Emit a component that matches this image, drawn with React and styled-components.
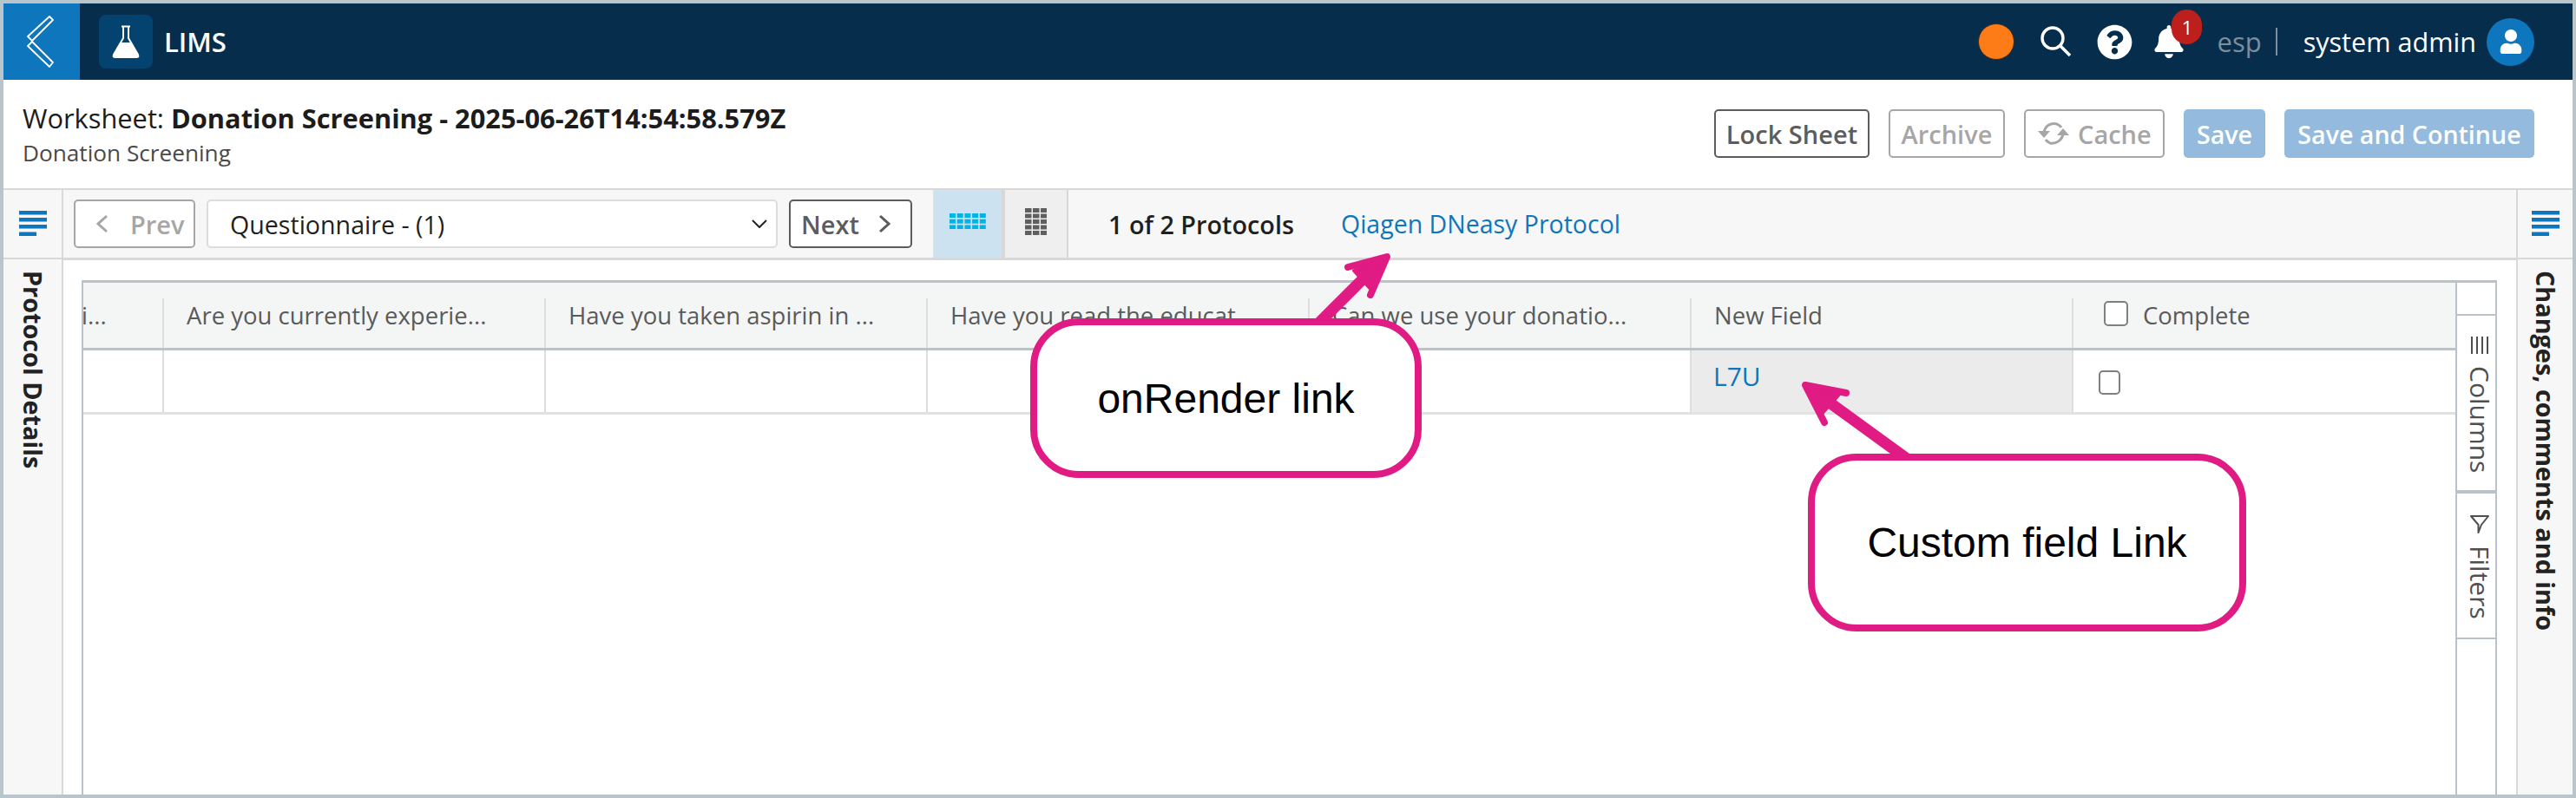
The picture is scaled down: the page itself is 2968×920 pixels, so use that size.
import React from 'react';
import styled, { createGlobalStyle } from 'styled-components';
import { FaBell, FaQuestionCircle, FaUser } from 'react-icons/fa';

const Global = createGlobalStyle`
  html, body { margin: 0; padding: 0; background: #fff; }
  body { font-family: "Open Sans", "Liberation Sans", sans-serif; overflow: hidden; }
  * { box-sizing: border-box; }
  svg { flex: none; }
`;

const Page = styled.div`
  position: relative;
  width: 2968px;
  height: 920px;
  border: 4px solid #b8c6cc;
  display: flex;
  flex-direction: column;
  overflow: hidden;
  background: #fff;
`;

const TopBar = styled.header`
  height: 88px;
  flex: none;
  background: #062d4b;
  display: flex;
  align-items: center;
  color: #fff;
  padding-right: 44px;
`;
const BackButton = styled.div`
  width: 88px;
  height: 88px;
  background: #0e76bc;
  display: flex;
  align-items: center;
  justify-content: center;
`;
const LogoTile = styled.div`
  width: 62px;
  height: 62px;
  margin-left: 22px;
  border-radius: 8px;
  background: #04436f;
  display: flex;
  align-items: center;
  justify-content: center;
`;
const AppName = styled.div`
  margin-left: 13px;
  font-size: 31px;
  font-weight: 600;
`;
const TopRight = styled.div`
  margin-left: auto;
  display: flex;
  align-items: center;
`;
const StatusDot = styled.div`
  width: 42px;
  height: 42px;
  border-radius: 50%;
  background: #fe7c18;
  border: 1px solid #3a2a20;
`;
const IconSlot = styled.div`
  position: relative;
  display: flex;
  margin-left: ${p => p.$ml}px;
`;
const Badge = styled.span`
  position: absolute;
  left: 22px;
  top: -18px;
  width: 35px;
  height: 40px;
  border-radius: 18px;
  background: #bd201c;
  color: #fff;
  font-size: 22px;
  display: flex;
  align-items: center;
  justify-content: center;
`;
const Lang = styled.span`
  margin-left: 36px;
  font-size: 31px;
  color: #7d8e9c;
`;
const Pipe = styled.span`
  width: 2px;
  height: 32px;
  margin-left: 16px;
  background: #7d8e9c;
`;
const UserName = styled.span`
  margin-left: 30px;
  font-size: 30.6px;
`;
const Avatar = styled.div`
  width: 55px;
  height: 55px;
  margin-left: 12px;
  border-radius: 50%;
  background: #0e76bc;
  overflow: hidden;
  display: flex;
  align-items: center;
  justify-content: center;
`;

const TitleBar = styled.section`
  height: 127px;
  flex: none;
  display: flex;
  align-items: flex-start;
  justify-content: space-between;
  padding: 23px 44px 0 22px;
  border-bottom: 2px solid #d8d8d8;
`;
const TitleLine = styled.div`
  font-size: 30.8px;
  line-height: 42px;
  color: #1c1c1c;
  b { font-weight: 700; }
`;
const SubLine = styled.div`
  font-size: 26.2px;
  line-height: 36px;
  margin-top: 1px;
  color: #4a4a4a;
`;
const Actions = styled.div`
  display: flex;
  gap: 22px;
  margin-top: 11px;
`;
const Btn = styled.div`
  width: ${p => p.$w}px;
  height: 56px;
  padding-left: ${p => p.$pad ?? 0}px;
  border: 2px solid ${p => p.$off ? '#a6a6a6' : '#5c5c5c'};
  border-radius: 5px;
  background: #fff;
  color: ${p => p.$off ? '#a6a6a6' : '#5c5c5c'};
  font-size: 29px;
  font-weight: 600;
  display: flex;
  align-items: center;
  justify-content: ${p => p.$start ? 'flex-start' : 'center'};
  gap: ${p => p.$gap || 0}px;
  white-space: nowrap;
`;
const PrimaryBtn = styled.div`
  width: ${p => p.$w}px;
  height: 56px;
  border-radius: 5px;
  background: #94bade;
  color: #fff;
  font-size: 28.6px;
  font-weight: 600;
  display: flex;
  align-items: center;
  justify-content: center;
  white-space: nowrap;
`;

const Body = styled.div`
  flex: 1;
  min-height: 0;
  display: flex;
`;
const SideRail = styled.aside`
  width: ${p => p.$w}px;
  flex: none;
  background: #f7f7f7;
  ${p => p.$right ? 'border-left' : 'border-right'}: 2px solid #d8d8d8;
`;
const RailIcon = styled.div`
  height: 80px;
  display: flex;
  align-items: center;
  justify-content: center;
  padding-bottom: 2px;
  border-bottom: 2px solid #d8d8d8;
`;
const RailLabel = styled.div`
  writing-mode: vertical-rl;
  font-size: 28.8px;
  font-weight: 700;
  color: #222;
  margin: 13px auto 0;
  line-height: 40px;
  white-space: nowrap;
  width: 40px;
`;
const Center = styled.main`
  flex: 1;
  min-width: 0;
  display: flex;
  flex-direction: column;
`;
const Toolbar = styled.div`
  height: 81px;
  flex: none;
  background: #f7f7f7;
  border-bottom: 3px solid #d8d8d8;
  display: flex;
  align-items: stretch;
  padding-left: 12px;
`;
const ToolLeft = styled.div`
  display: flex;
  align-items: center;
  gap: 13px;
`;
const SelectBox = styled.div`
  width: 658px;
  height: 56px;
  border: 2px solid #dcdcdc;
  border-radius: 5px;
  background: #fff;
  padding: 0 10px 0 25px;
  display: flex;
  align-items: center;
  justify-content: space-between;
  font-size: 28.6px;
  color: #1f1f1f;
`;
const Toggle = styled.div`
  width: ${p => p.$w}px;
  margin-left: ${p => p.$ml || 0}px;
  background: ${p => p.$on ? '#cde2f1' : '#efefef'};
  border-left: ${p => p.$on ? '1px solid #e2e2e2' : '2px solid #d8d8d8'};
  border-right: 2px solid #d8d8d8;
  display: flex;
  align-items: center;
  justify-content: center;
  padding-bottom: 6px;
`;
const ProtocolCount = styled.div`
  margin-left: 46px;
  align-self: center;
  font-size: 28.8px;
  font-weight: 600;
  color: #1f1f1f;
`;
const ProtocolLink = styled.a`
  margin-left: 54px;
  align-self: center;
  font-size: 28.5px;
  color: #0e76bc;
`;

const TableArea = styled.div`
  flex: 1;
  min-height: 0;
  margin: 23px 22px 0 21px;
  border-left: 2px solid #bcc2c9;
  border-right: 2px solid #bcc2c9;
  border-top: 3px solid #bcc2c9;
  display: flex;
`;
const Grid = styled.div`
  flex: 1;
  min-width: 0;
  overflow: hidden;
`;
const HeadRow = styled.div`
  height: 78px;
  display: grid;
  grid-template-columns: 91px repeat(6, 440px);
  background: #f4f6f6;
  border-bottom: 3px solid #bcc2c9;
  padding-top: 18px;
`;
const HeadCell = styled.div`
  border-left: ${p => p.$first ? 'none' : '2px solid #dcdee0'};
  padding-left: ${p => p.$first ? 0 : (p.$pad || 26)}px;
  padding-top: 2px;
  font-size: 27.5px;
  line-height: 36px;
  color: #5a5a5a;
  white-space: nowrap;
  overflow: hidden;
  display: flex;
  align-items: flex-start;
`;
const Clipped = styled.span`
  margin-left: -2px;
`;
const BodyRow = styled.div`
  height: 74px;
  display: grid;
  grid-template-columns: 91px repeat(6, 440px);
  border-bottom: 3px solid #dfe1e3;
`;
const BodyCell = styled.div`
  border-left: ${p => p.$first ? 'none' : '2px solid #dcdee0'};
  background: ${p => p.$hl ? '#ebebeb' : 'transparent'};
  padding-left: ${p => p.$pad || 0}px;
`;
const CellLink = styled.a`
  display: block;
  font-size: 30px;
  line-height: 40px;
  margin-top: 10px;
  color: #0e76bc;
`;
const HeadCheck = styled.span`
  width: 28px;
  height: 29px;
  margin: 1px 17px 0 0;
  border: 2px solid #7f7f7f;
  border-radius: 5px;
  background: #fff;
  flex: none;
`;
const RowCheck = styled.span`
  display: block;
  width: 25px;
  height: 28px;
  margin-top: 23px;
  border: 2px solid #7f7f7f;
  border-radius: 5px;
  background: #fff;
`;
const SideTabs = styled.div`
  width: 46px;
  flex: none;
  border-left: 2px solid #bcc2c9;
  display: flex;
  flex-direction: column;
`;
const TabSpacer = styled.div`
  height: 38px;
  flex: none;
  border-bottom: 2px solid #bcc2c9;
`;
const SideTab = styled.div`
  height: ${p => p.$h}px;
  flex: none;
  border-bottom: ${p => p.$b}px solid #bcc2c9;
  display: flex;
  flex-direction: column;
  align-items: center;
  padding: ${p => p.$pt}px 0 0 8px;
  gap: ${p => p.$gap}px;
`;
const TabText = styled.span`
  writing-mode: vertical-rl;
  font-size: 30px;
  line-height: 32px;
  color: #4f4f4f;
  white-space: nowrap;
`;

const Overlay = styled.svg`
  position: absolute;
  left: -4px;
  top: -4px;
  width: 2968px;
  height: 920px;
  pointer-events: none;
`;
const Callout = styled.div`
  position: absolute;
  left: ${p => p.$x - 4}px;
  top: ${p => p.$y - 4}px;
  width: ${p => p.$w}px;
  height: ${p => p.$h}px;
  background: #fff;
  border: 8px solid #e01b84;
  border-radius: 56px;
  display: flex;
  align-items: center;
  justify-content: center;
  font-family: "Liberation Sans", Arial, sans-serif;
  font-size: 48px;
  color: #000;
  white-space: nowrap;
`;

const MenuBars = () => (
  <svg width="32" height="29" viewBox="0 0 32 29">
    <g fill="#0e76bc">
      <rect x="0" y="0" width="32" height="4.5" />
      <rect x="0" y="8" width="32" height="4.5" />
      <rect x="0" y="16" width="32" height="4.5" />
      <rect x="0" y="24.5" width="20" height="4.5" />
    </g>
  </svg>
);

const Chevron = ({ dir, color }) => (
  <svg width="16" height="22" viewBox="0 0 16 22" fill="none">
    <path d={dir === 'left' ? 'M13 2 L3 11 L13 20' : 'M3 2 L13 11 L3 20'} stroke={color} strokeWidth="3" />
  </svg>
);

const GridIcon = ({ cols, rows, cw, ch, gap, color }) => {
  const cells = [];
  for (let r = 0; r < rows; r++) {
    for (let c = 0; c < cols; c++) {
      cells.push(<rect key={`${r}-${c}`} x={c * (cw + gap)} y={r * (ch + gap)} width={cw} height={ch} fill={color} />);
    }
  }
  return <svg width={cols * (cw + gap) - gap} height={rows * (ch + gap) - gap}>{cells}</svg>;
};

export default function App() {
  return (
    <>
      <Global />
      <Page>
        <TopBar>
          <BackButton>
            <svg width="88" height="88" viewBox="0 0 88 88" fill="none" stroke="#fff" strokeWidth="1.8" strokeLinejoin="round">
              <path d="M53 15 L57 19 L33 43 L28 38 Z" />
              <path d="M33 44 L28 49 L53 73 L57 68 Z" />
            </svg>
          </BackButton>
          <LogoTile>
            <svg width="32" height="38" viewBox="0 0 32 38">
              <path d="M13 2 V15 L2 34 Q1 37 3 37 H29 Q31 37 30 34 L19 15 V2" fill="none" stroke="#fff" strokeWidth="2" />
              <path d="M11 1.5 H21" stroke="#fff" strokeWidth="2" />
              <path d="M9.5 20 H22.5 L30 34 Q31 37 29 37 H3 Q1 37 2 34 Z" fill="#fff" />
            </svg>
          </LogoTile>
          <AppName>LIMS</AppName>
          <TopRight>
            <StatusDot />
            <IconSlot $ml={30}>
              <svg width="36" height="36" viewBox="0 0 36 36" fill="none" stroke="#fff">
                <circle cx="14" cy="14" r="12" strokeWidth="3.4" />
                <path d="M23 23 L34 34" strokeWidth="3.6" />
              </svg>
            </IconSlot>
            <IconSlot $ml={29}><FaQuestionCircle size={41} color="#fff" /></IconSlot>
            <IconSlot $ml={23}>
              <FaBell size={38} color="#fff" />
              <Badge>1</Badge>
            </IconSlot>
            <Lang>esp</Lang>
            <Pipe />
            <UserName>system admin</UserName>
            <Avatar><FaUser size={28} color="#fff" /></Avatar>
          </TopRight>
        </TopBar>

        <TitleBar>
          <div>
            <TitleLine>Worksheet: <b>Donation Screening - 2025-06-26T14:54:58.579Z</b></TitleLine>
            <SubLine>Donation Screening</SubLine>
          </div>
          <Actions>
            <Btn $w={179}>Lock Sheet</Btn>
            <Btn $off $w={134}>Archive</Btn>
            <Btn $off $w={162} $pad={14} $gap={10} $start>
              <svg width="36" height="30" viewBox="0 0 36 30" fill="none" stroke="#a6a6a6" strokeWidth="3">
                <path d="M7 14 C8 6 15 2 22 4 C24 5 26 6 27 8" />
                <path d="M29 15 C28 23 21 27 14 26 C12 25 10 24 9 22" />
                <path d="M0 12 H14 L7 20 Z" fill="#a6a6a6" stroke="none" />
                <path d="M22 17 H36 L29 9 Z" fill="#a6a6a6" stroke="none" />
              </svg>
              Cache
            </Btn>
            <PrimaryBtn $w={94}>Save</PrimaryBtn>
            <PrimaryBtn $w={288}>Save and Continue</PrimaryBtn>
          </Actions>
        </TitleBar>

        <Body>
          <SideRail $w={69}>
            <RailIcon><MenuBars /></RailIcon>
            <RailLabel>Protocol Details</RailLabel>
          </SideRail>
          <Center>
            <Toolbar>
              <ToolLeft>
                <Btn $off $w={140} $pad={23} $gap={24} $start><Chevron dir="left" color="#a6a6a6" />Prev</Btn>
                <SelectBox>
                  Questionnaire - (1)
                  <svg width="18" height="10" viewBox="0 0 18 10" fill="none">
                    <path d="M1 1 L9 9 L17 1" stroke="#222" strokeWidth="2" />
                  </svg>
                </SelectBox>
                <Btn $w={142} $pad={12} $gap={21} $start>Next<Chevron dir="right" color="#5c5c5c" /></Btn>
              </ToolLeft>
              <Toggle $on $w={81} $ml={24}>
                <GridIcon cols={5} rows={3} cw={7} ch={5} gap={1.7} color="#00b5e6" />
              </Toggle>
              <Toggle $w={75}>
                <GridIcon cols={3} rows={5} cw={7.5} ch={5} gap={1.5} color="#5f5f5f" />
              </Toggle>
              <ProtocolCount>1 of 2 Protocols</ProtocolCount>
              <ProtocolLink>Qiagen DNeasy Protocol</ProtocolLink>
            </Toolbar>
            <TableArea>
              <Grid>
                <HeadRow>
                  <HeadCell $first><Clipped>i...</Clipped></HeadCell>
                  <HeadCell>Are you currently experie...</HeadCell>
                  <HeadCell>Have you taken aspirin in ...</HeadCell>
                  <HeadCell>Have you read the educat...</HeadCell>
                  <HeadCell>Can we use your donatio...</HeadCell>
                  <HeadCell>New Field</HeadCell>
                  <HeadCell $pad={35}><HeadCheck />Complete</HeadCell>
                </HeadRow>
                <BodyRow>
                  <BodyCell $first />
                  <BodyCell />
                  <BodyCell />
                  <BodyCell />
                  <BodyCell />
                  <BodyCell $hl $pad={25}><CellLink>L7U</CellLink></BodyCell>
                  <BodyCell $pad={29}><RowCheck /></BodyCell>
                </BodyRow>
              </Grid>
              <SideTabs>
                <TabSpacer />
                <SideTab $h={205} $b={4} $pt={24} $gap={14}>
                  <svg width="22" height="20" viewBox="0 0 22 20" stroke="#4f4f4f" strokeWidth="2">
                    <path d="M2 0 V20 M8 0 V20 M14 0 V20 M20 0 V20" />
                  </svg>
                  <TabText>Columns</TabText>
                </SideTab>
                <SideTab $h={168} $b={2} $pt={25} $gap={14}>
                  <svg width="22" height="21" viewBox="0 0 22 21" fill="none" stroke="#4f4f4f" strokeWidth="2" strokeLinejoin="round">
                    <path d="M1 1 H21 L13 11 L9.5 20 V11 Z" />
                  </svg>
                  <TabText>Filters</TabText>
                </SideTab>
              </SideTabs>
            </TableArea>
          </Center>
          <SideRail $w={65} $right>
            <RailIcon><MenuBars /></RailIcon>
            <RailLabel>Changes, comments and info</RailLabel>
          </SideRail>
        </Body>

        <Overlay viewBox="0 0 2968 920" fill="none" stroke="#e01b84" strokeLinecap="round" strokeLinejoin="round">
          <path d="M1512 380 L1590 302" strokeWidth="13" strokeLinecap="butt" />
          <path d="M1553 308 L1598 296 L1579 340" strokeWidth="8" />
          <path d="M1592 300 L1560 312 L1578 332 Z" fill="#e01b84" strokeWidth="4" />
          <path d="M2200 531 L2090 451" strokeWidth="13" strokeLinecap="butt" />
          <path d="M2127 453 L2080 444 L2102 487" strokeWidth="8" />
          <path d="M2086 448 L2118 456 L2100 476 Z" fill="#e01b84" strokeWidth="4" />
        </Overlay>
        <Callout $x={1187} $y={367} $w={451} $h={184}>onRender link</Callout>
        <Callout $x={2083} $y={523} $w={505} $h={205}>Custom field Link</Callout>
      </Page>
    </>
  );
}
